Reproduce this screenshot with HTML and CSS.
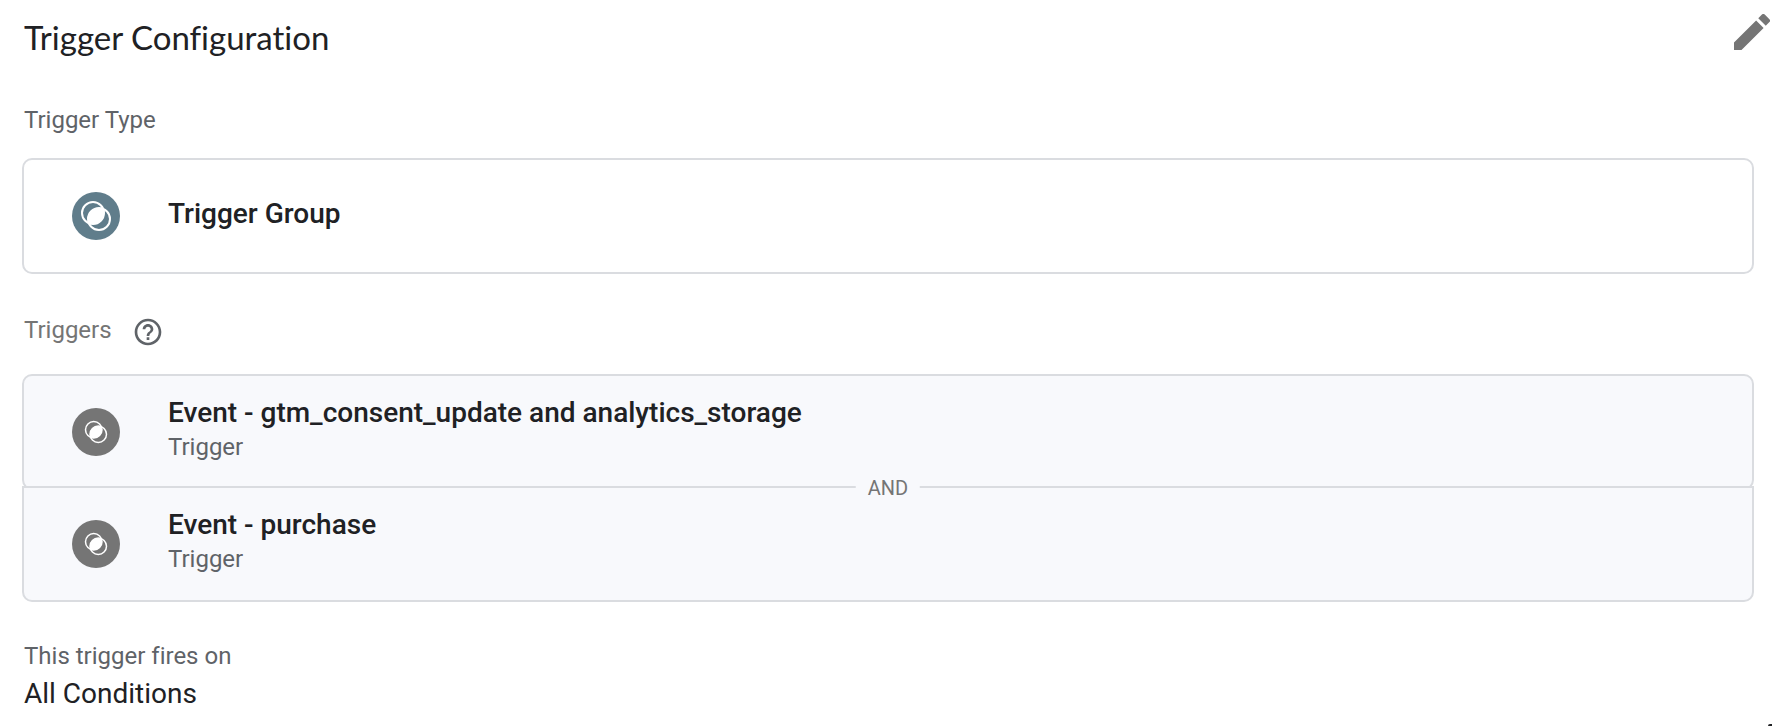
FILE: index.html
```html
<!DOCTYPE html>
<html lang="en">
<head>
<meta charset="utf-8">
<title>Trigger Configuration</title>
<link rel="stylesheet" href="styles.css">
</head>
<body>
<svg class="defs" aria-hidden="true">
  <symbol id="overlap" viewBox="0 0 32 32">
    <circle cx="13" cy="13" r="11" fill="none" stroke="#fff" stroke-width="2"/>
    <circle cx="19" cy="19" r="11" fill="none" stroke="#fff" stroke-width="2"/>
    <path d="M23.18 8.82A11 11 0 0 0 8.82 23.18A11 11 0 0 0 23.18 8.82Z" fill="#fff"/>
  </symbol>
</svg>
<main class="panel">
  <header class="header">
    <h1 class="heading">Trigger Configuration</h1>
    <button class="edit" type="button" aria-label="Edit">
      <svg viewBox="3 3 18 18" width="36" height="36"><path fill="#757575" d="M3 17.25V21h3.75L17.81 9.94l-3.75-3.75L3 17.25zM20.71 7.04a1 1 0 0 0 0-1.41l-2.34-2.34a1 1 0 0 0-1.41 0l-1.83 1.83 3.75 3.75 1.83-1.83z"/></svg>
    </button>
  </header>

  <section class="type">
    <h2 class="label">Trigger Type</h2>
    <div class="card">
      <span class="badge badge-group"><svg width="32" height="32"><use href="#overlap"/></svg></span>
      <div class="card-text"><p class="name">Trigger Group</p></div>
    </div>
  </section>

  <section class="triggers">
    <div class="label-row">
      <h2 class="label">Triggers</h2>
      <button class="help" type="button" aria-label="Help">
        <svg viewBox="0 0 24 24" width="32" height="32"><path fill="#5f6368" d="M11 18h2v-2h-2v2zm1-16C6.48 2 2 6.48 2 12s4.48 10 10 10 10-4.48 10-10S17.52 2 12 2zm0 18c-4.41 0-8-3.59-8-8s3.59-8 8-8 8 3.59 8 8-3.59 8-8 8zm0-14c-2.21 0-4 1.79-4 4h2c0-1.1.9-2 2-2s2 .9 2 2c0 2-3 1.75-3 5h2c0-2.25 3-2.5 3-5 0-2.21-1.79-4-4-4z"/></svg>
      </button>
    </div>
    <ul class="list">
      <li class="card card-item">
        <span class="badge"><svg width="24" height="24"><use href="#overlap"/></svg></span>
        <div class="card-text"><p class="name">Event - gtm_consent_update and analytics_storage</p><p class="kind">Trigger</p></div>
      </li>
      <li class="card card-item card-last">
        <span class="operator">AND</span>
        <span class="badge"><svg width="24" height="24"><use href="#overlap"/></svg></span>
        <div class="card-text"><p class="name">Event - purchase</p><p class="kind">Trigger</p></div>
      </li>
    </ul>
  </section>

  <section class="fires">
    <h2 class="label">This trigger fires on</h2>
    <p class="value">All Conditions</p>
  </section>
</main>
<span class="corner"></span>
</body>
</html>
```
FILE: styles.css
```css
* {
  box-sizing: border-box;
}

body,
h1,
h2,
p,
ul {
  margin: 0;
  padding: 0;
}

body {
  background: #fff;
  color: #202124;
  font-family: Roboto, "Liberation Sans", sans-serif;
  font-variant-ligatures: none;
}

.defs {
  position: absolute;
  width: 0;
  height: 0;
}

.panel {
  padding: 14px 18px 0 22px;
}

.header {
  display: flex;
  justify-content: space-between;
  align-items: flex-start;
  margin-right: -16px;
  padding-left: 2px;
}

.heading {
  font-family: Lato, sans-serif;
  font-size: 33px;
  font-weight: 400;
  line-height: 46px;
}

.edit,
.help {
  display: block;
  padding: 0;
  border: 0;
  background: none;
  cursor: pointer;
}

.edit svg,
.help svg,
.badge svg {
  display: block;
}

.type {
  margin-top: 44px;
}

.label {
  padding-left: 2px;
  color: #5f6368;
  font-size: 24px;
  font-weight: 400;
  line-height: 32px;
}

.card {
  display: flex;
  align-items: center;
  gap: 48px;
  min-height: 116px;
  padding: 0 48px;
  border: 2px solid #dadce0;
  border-radius: 10px;
  background: #fff;
}

.type .card {
  margin-top: 22px;
}

.badge {
  display: flex;
  flex: none;
  align-items: center;
  justify-content: center;
  width: 48px;
  height: 48px;
  border-radius: 50%;
  background: #757575;
}

.badge-group {
  background: #607d8b;
}

.card-text {
  padding-bottom: 6px;
}

.type .card-text {
  padding-bottom: 4px;
}

.name {
  font-size: 28px;
  font-weight: 500;
  line-height: 36px;
}

.kind {
  color: #5f6368;
  font-size: 24px;
  line-height: 32px;
}

.triggers {
  margin-top: 40px;
}

.label-row {
  display: flex;
  align-items: flex-end;
  gap: 20px;
}

.label-row .label {
  padding-bottom: 2px;
  color: #757575;
}

.list {
  margin-top: 26px;
  list-style: none;
}

.card-item {
  position: relative;
  background: #f8f9fc;
}

.card-last {
  margin-top: -4px;
  border-radius: 0 0 10px 10px;
}

.operator {
  position: absolute;
  top: 0;
  left: 50%;
  padding: 0 12px;
  transform: translate(-50%, -50%);
  background: #f8f9fc;
  color: #757575;
  font-size: 20px;
  line-height: 24px;
}

.fires {
  margin-top: 38px;
}

.value {
  margin-top: 4px;
  padding-left: 2px;
  font-size: 28px;
  line-height: 36px;
}

.corner {
  position: fixed;
  right: 0;
  bottom: 0;
  width: 4px;
  height: 2px;
  border-top-left-radius: 2px;
  background: #202124;
}
```
